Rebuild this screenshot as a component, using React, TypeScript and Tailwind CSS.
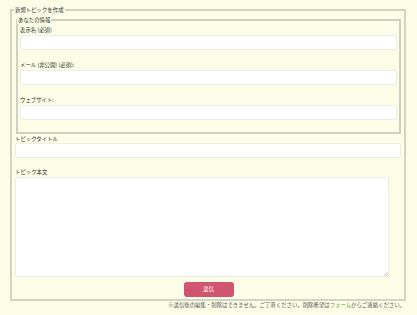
import React from 'react';

const font = { fontFamily: '"Noto Sans CJK JP", "Noto Sans", sans-serif' };

const Field: React.FC<{ label: string }> = ({ label }) => (
  <div className="mb-[11px]">
    <label className="block text-[5.4px] leading-[8px] text-[#333]">{label}</label>
    <input
      type="text"
      className="mt-[1px] block h-[15px] w-full rounded-[2px] border border-[#ececE4] bg-white outline-none"
    />
  </div>
);

export default function App() {
  return (
    <div className="h-[315px] w-[417px] overflow-hidden bg-[#fcfde6]" style={font}>
      <fieldset className="ml-[10px] mt-[6px] w-[396px] border-2 border-[#d3d3c4] pl-[3px] pr-[2px] pb-[2px]">
        <legend className="-ml-[1px] px-[1px] text-[5.4px] leading-[8px] text-[#333]">新規トピックを作成</legend>

        <fieldset className="mx-[1px] mt-[2px] border-2 border-[#d0d0c1] px-[2px] pt-[2px] pb-[1px]">
          <legend className="-ml-[3px] px-[1px] text-[5.4px] leading-[8px] text-[#333]">あなたの情報</legend>
          <Field label="表示名 (必須)" />
          <Field label="メール (非公開) (必須):" />
          <Field label="ウェブサイト:" />
        </fieldset>

        <div className="mt-[1px]">
          <label className="block text-[5.4px] leading-[8px] text-[#333]">トピックタイトル</label>
          <input
            type="text"
            className="block h-[15px] w-[386px] rounded-[2px] border border-[#ececE4] bg-white outline-none"
          />
        </div>

        <div className="mt-[10px]">
          <label className="block text-[5.4px] leading-[8px] text-[#333]">トピック本文</label>
          <div className="relative mt-[1px] w-[374px]">
            <textarea className="block h-[100px] w-full resize-none rounded-[2px] border border-[#ececE4] bg-white outline-none" />
            <svg className="absolute bottom-[1px] right-[1px]" width="4" height="4" viewBox="0 0 4 4">
              <path d="M4 0L0 4M4 2L2 4" stroke="#aaa" strokeWidth="0.6" />
            </svg>
          </div>
        </div>

        <button
          type="button"
          className="mx-auto mt-[5px] block h-[15px] w-[50px] rounded-[3px] bg-[#d0566f] text-[5.4px] leading-[15px] text-white"
        >
          送信
        </button>
      </fieldset>

      <p className="pr-[12px] text-right text-[5.4px] leading-[8px] text-[#555]">
        ※送信後の編集・削除はできません。ご了承ください。削除希望は
        <span className="text-[#5f9a3c]">フォーム</span>
        からご連絡ください。
      </p>
    </div>
  );
}
